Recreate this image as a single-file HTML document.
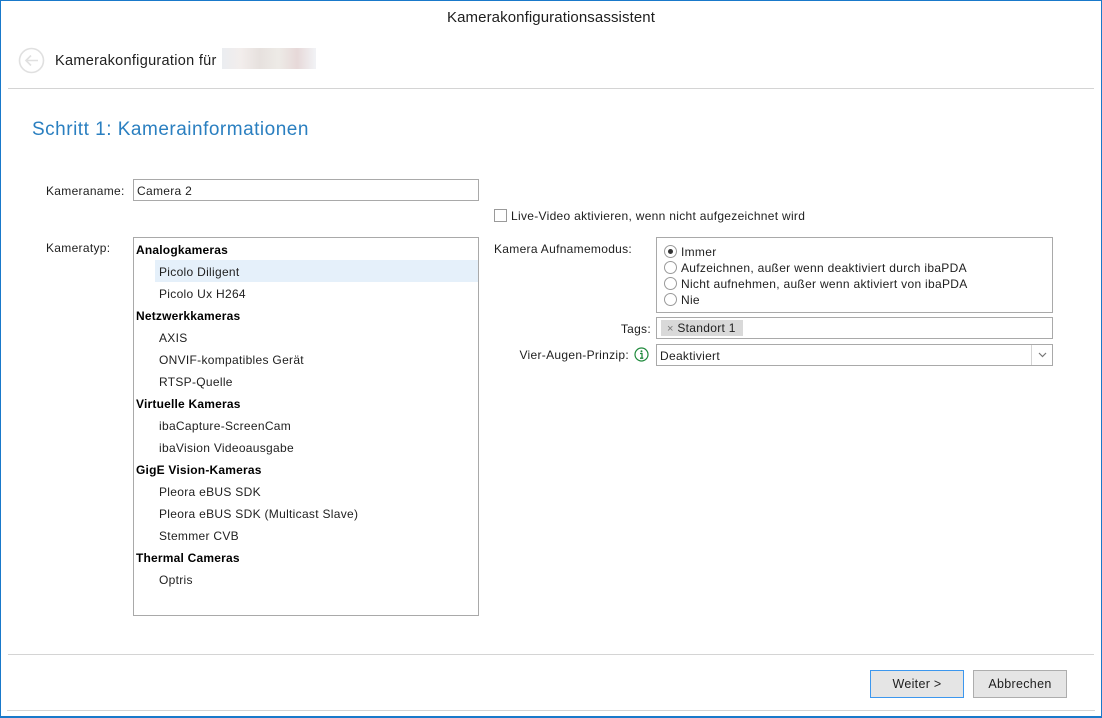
<!DOCTYPE html>
<html><head><meta charset="utf-8"><style>
*{box-sizing:border-box;margin:0;padding:0}
body{width:1102px;height:718px;position:relative;background:#fff;font-family:"Liberation Sans",sans-serif;font-size:12px;letter-spacing:.3px;color:#1e1e1e;overflow:hidden}
.a{position:absolute;white-space:nowrap}
.frame{position:absolute;left:0;top:0;width:1102px;height:718px;border:1px solid #1979ca;border-bottom-width:2px}
.line{position:absolute;height:1px;background:#d4d4d4}
.box{position:absolute;border:1px solid #a9a9a9;background:#fff}
.it{position:absolute;left:25px;line-height:22px;height:22px;top:1px}
.hd{position:absolute;left:2px;font-weight:bold;line-height:22px;height:22px;color:#000;letter-spacing:.2px}
.rad{position:absolute;width:13px;height:13px;border:1px solid #9a9a9a;border-radius:50%;background:#fff}
.btn{position:absolute;height:28px;border:1px solid #adadad;background:#e5e5e5;text-align:center;line-height:27px;font-size:12.5px}
</style></head><body>
<div class="frame"></div>
<div class="a" style="left:0;width:1102px;text-align:center;top:9px;font-size:15px;letter-spacing:.1px">Kamerakonfigurationsassistent</div>
<svg class="a" style="left:18px;top:47px" width="27" height="27"><circle cx="13.5" cy="13.5" r="12" fill="none" stroke="#e0e0e0" stroke-width="1.6"/><path d="M20 13.5H8M13 8.5L8 13.5L13 18.5" fill="none" stroke="#e0e0e0" stroke-width="1.6"/></svg>
<div class="a" style="left:55px;top:53px;font-size:14.5px">Kamerakonfiguration für</div>
<div class="a" style="left:222px;top:48px;width:94px;height:21px;background:linear-gradient(90deg,#e2e5ea,#ede6e4,#dcd4d0,#e6e2dc,#dcc8c8,#eceef2);opacity:.7"></div>
<div class="line" style="left:8px;top:88px;width:1086px"></div>
<div class="a" style="left:32px;top:119px;font-size:19px;color:#2a7fc0;letter-spacing:.5px">Schritt 1: Kamerainformationen</div>
<div class="a" style="left:46px;top:184px">Kameraname:</div>
<div class="box" style="left:133px;top:179px;width:346px;height:22px"><span class="a" style="left:3px;top:4px">Camera 2</span></div>
<div class="a" style="left:494px;top:209px;width:13px;height:13px;border:1px solid #9a9a9a"></div>
<div class="a" style="left:511px;top:209px">Live-Video aktivieren, wenn nicht aufgezeichnet wird</div>
<div class="a" style="left:46px;top:241px">Kameratyp:</div>
<div class="box" style="left:133px;top:237px;width:346px;height:379px">
<div class="a" style="left:21px;top:22px;width:323px;height:22px;background:#e5f0fa"></div>
<div class="hd" style="top:1px">Analogkameras</div>
<div class="it" style="top:23px">Picolo Diligent</div>
<div class="it" style="top:45px">Picolo Ux H264</div>
<div class="hd" style="top:67px">Netzwerkkameras</div>
<div class="it" style="top:89px">AXIS</div>
<div class="it" style="top:111px">ONVIF-kompatibles Gerät</div>
<div class="it" style="top:133px">RTSP-Quelle</div>
<div class="hd" style="top:155px">Virtuelle Kameras</div>
<div class="it" style="top:177px">ibaCapture-ScreenCam</div>
<div class="it" style="top:199px">ibaVision Videoausgabe</div>
<div class="hd" style="top:221px">GigE Vision-Kameras</div>
<div class="it" style="top:243px">Pleora eBUS SDK</div>
<div class="it" style="top:265px">Pleora eBUS SDK (Multicast Slave)</div>
<div class="it" style="top:287px">Stemmer CVB</div>
<div class="hd" style="top:309px">Thermal Cameras</div>
<div class="it" style="top:331px">Optris</div>
</div>
<div class="a" style="left:494px;top:242px">Kamera Aufnamemodus:</div>
<div class="box" style="left:656px;top:237px;width:397px;height:76px">
<div class="rad" style="left:7px;top:7px"><div style="position:absolute;left:3px;top:3px;width:5px;height:5px;border-radius:50%;background:#333"></div></div>
<div class="a" style="left:24px;top:7px">Immer</div>
<div class="rad" style="left:7px;top:23px"></div><div class="a" style="left:24px;top:23px">Aufzeichnen, außer wenn deaktiviert durch ibaPDA</div>
<div class="rad" style="left:7px;top:39px"></div><div class="a" style="left:24px;top:39px">Nicht aufnehmen, außer wenn aktiviert von ibaPDA</div>
<div class="rad" style="left:7px;top:55px"></div><div class="a" style="left:24px;top:55px">Nie</div>
</div>
<div class="a" style="left:560px;width:91px;text-align:right;top:322px">Tags:</div>
<div class="box" style="left:656px;top:317px;width:397px;height:22px">
<div class="a" style="left:4px;top:2px;width:82px;height:16px;background:#d9d9d9;line-height:17px;padding-left:6px"><span style="color:#777;font-size:11px">×</span> Standort 1</div>
</div>
<div class="a" style="left:480px;width:149px;text-align:right;top:348px">Vier-Augen-Prinzip:</div>
<svg class="a" style="left:634px;top:347px" width="15" height="15"><circle cx="7.5" cy="7.5" r="6.5" fill="none" stroke="#1f8a3c" stroke-width="1.2"/><circle cx="7.5" cy="4.2" r="1" fill="#1f8a3c"/><path d="M6 6.5H8V11M6 11.2H9.3" stroke="#1f8a3c" stroke-width="1.3" fill="none"/></svg>
<div class="box" style="left:656px;top:344px;width:397px;height:22px">
<div class="a" style="left:3px;top:4px">Deaktiviert</div>
<div class="a" style="left:374px;top:0;width:1px;height:20px;background:#d4d4d4"></div>
<svg class="a" style="left:381px;top:7px" width="9" height="6"><path d="M1 1L4.5 4.5L8 1" fill="none" stroke="#777" stroke-width="1.2"/></svg>
</div>
<div class="line" style="left:8px;top:654px;width:1086px"></div>
<div class="btn" style="left:870px;top:670px;width:94px;border-color:#3c97ee">Weiter &gt;</div>
<div class="btn" style="left:973px;top:670px;width:94px">Abbrechen</div>
<div class="line" style="left:7px;top:710px;width:1088px"></div>
</body></html>
